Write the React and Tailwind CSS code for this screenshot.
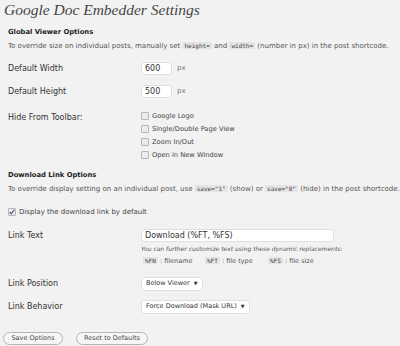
export default function App() {
  const code = "bg-[#e4e4e4] px-[2px] text-[6px] font-['DejaVu_Sans_Mono',monospace] text-[#444]";
  const label = "w-[133px] shrink-0 text-[8px] leading-[10px] text-[#333]";
  const input = "h-[13px] rounded-[3px] border border-[#dfdfdf] bg-white px-[3px] text-[8px] leading-[11px] text-[#333]";
  const select = "flex h-[14px] items-center gap-[4px] rounded-[3px] border border-[#dfdfdf] bg-white px-[4px] text-[6.5px] text-[#333]";
  const box = "h-[8px] w-[8px] shrink-0 rounded-[1px] border border-[#b5b5b5] bg-[#ececec]";
  const btn = "h-[13px] rounded-full border border-[#b5b5b5] bg-[#f6f6f6] text-[6.5px] leading-[11px] text-[#464646]";

  return (
    <div className="h-[346px] w-[400px] overflow-hidden bg-[#f2f2f2] font-['DejaVu_Sans',Verdana,sans-serif] text-[#333]">
      <h1 className="h-[20px] pl-[4px] font-['Liberation_Serif',Georgia,serif] text-[15.5px] italic leading-[20px] text-[#464646]">
        Google Doc Embedder Settings
      </h1>

      <div className="px-[8px]">
        <h3 className="mt-[7px] text-[6.8px] font-bold leading-[11px] text-[#222]">Global Viewer Options</h3>
        <p className="mt-[2px] whitespace-nowrap text-[7px] leading-[11px] text-[#555]">
          To override size on individual posts, manually set <span className={code}>height=</span> and{" "}
          <span className={code}>width=</span> (number in px) in the post shortcode.
        </p>

        <div className="mt-[10px] flex items-center">
          <div className={label}>Default Width</div>
          <div className={`${input} w-[31px]`}>600</div>
          <span className="ml-[5px] text-[7px] text-[#777]">px</span>
        </div>
        <div className="mt-[10px] flex items-center">
          <div className={label}>Default Height</div>
          <div className={`${input} w-[31px]`}>500</div>
          <span className="ml-[5px] text-[7px] text-[#777]">px</span>
        </div>

        <div className="mt-[13px] flex">
          <div className={`${label} pt-[2px]`}>Hide From Toolbar:</div>
          <div className="flex flex-col gap-[3px]">
            {["Google Logo", "Single/Double Page View", "Zoom In/Out", "Open in New Window"].map((t) => (
              <div key={t} className="flex h-[10px] items-center gap-[3px] text-[6.7px] text-[#444]">
                <span className={box} />
                <span>{t}</span>
              </div>
            ))}
          </div>
        </div>

        <h3 className="mt-[10px] text-[6.8px] font-bold leading-[11px] text-[#222]">Download Link Options</h3>
        <p className="mt-[2px] whitespace-nowrap text-[7px] leading-[11px] text-[#555]">
          To override display setting on an individual post, use <span className={code}>save="1"</span> (show) or{" "}
          <span className={code}>save="0"</span> (hide) in the post shortcode.
        </p>

        <div className="mt-[12px] flex h-[10px] items-center gap-[3px] text-[7px] text-[#444]">
          <span className={`${box} relative`}>
            <svg viewBox="0 0 8 8" className="absolute left-0 top-0 h-[6px] w-[6px]">
              <path d="M1 4 L3 6.5 L7 1" fill="none" stroke="#3d4f80" strokeWidth="1.5" />
            </svg>
          </span>
          <span>Display the download link by default</span>
        </div>

        <div className="mt-[12px] flex">
          <div className={`${label} pt-[2px]`}>Link Text</div>
          <div>
            <div className={`${input} w-[193px] text-[7.7px]`}>Download (%FT, %FS)</div>
            <p className="mt-[2px] whitespace-nowrap text-[6px] italic leading-[10px] text-[#555]">
              You can further customize text using these dynamic replacements:
            </p>
            <div className="mt-[2px] flex whitespace-nowrap pl-[2px] text-[6.5px] leading-[10px] text-[#555]">
              <span className="w-[62px]"><span className={code}>%FN</span> : filename</span>
              <span className="w-[63px]"><span className={code}>%FT</span> : file type</span>
              <span><span className={code}>%FS</span> : file size</span>
            </div>
          </div>
        </div>

        <div className="mt-[11px] flex items-center">
          <div className={label}>Link Position</div>
          <div className={select}>
            Below Viewer <span className="text-[5px]">▼</span>
          </div>
        </div>
        <div className="mt-[9px] flex items-center">
          <div className={label}>Link Behavior</div>
          <div className={select}>
            Force Download (Mask URL) <span className="text-[5px]">▼</span>
          </div>
        </div>
      </div>

      <div className="mt-[18px] flex gap-[13px] pl-[3px]">
        <button className={`${btn} w-[60px]`}>Save Options</button>
        <button className={`${btn} w-[72px]`}>Reset to Defaults</button>
      </div>
    </div>
  );
}
